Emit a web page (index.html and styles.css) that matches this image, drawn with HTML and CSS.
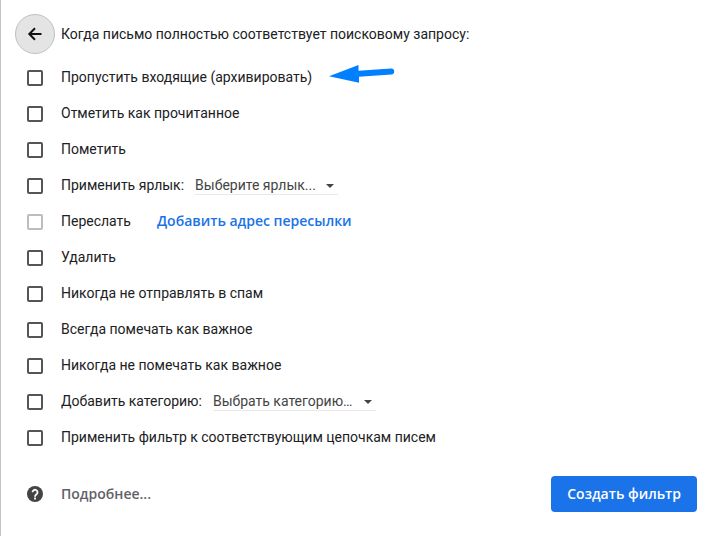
FILE: index.html
```html
<!DOCTYPE html>
<html lang="ru">
<head>
  <meta charset="UTF-8">
  <title>Создание фильтра</title>
  <link rel="stylesheet" href="styles.css">
</head>
<body>

  <form class="filter" action="#" method="POST">
    <div class="header">
      <button type="button" class="back" aria-label="Назад">
        <svg width="20" height="20" viewBox="0 0 20 20" fill="none" stroke="#111" stroke-width="2">
          <path d="M16.500 10H4.800M10 4.200L4.300 10l5.700 5.800"/>
        </svg>
      </button>
      <span>Когда письмо полностью соответствует поисковому запросу:</span>
    </div>

    <div class="options">
      <div class="row">
        <input type="checkbox" id="archive">
        <label for="archive">Пропустить входящие (архивировать)</label>
        <svg class="pointer" width="66" height="20" viewBox="0 0 66 20">
          <path d="M0 12.2L29.5 1v5.8L62 4.5a3 3 0 0 1 .4 6L30 12.7v6z" fill="#0080ff"/>
        </svg>
      </div>
      <div class="row">
        <input type="checkbox" id="read">
        <label for="read">Отметить как прочитанное</label>
      </div>
      <div class="row">
        <input type="checkbox" id="star">
        <label for="star">Пометить</label>
      </div>
      <div class="row">
        <input type="checkbox" id="label">
        <label for="label">Применить ярлык:</label>
        <span class="select">
          <select class="select-label" aria-label="Ярлык"><option>Выберите ярлык...</option></select>
        </span>
      </div>
      <div class="row">
        <input type="checkbox" id="forward" disabled>
        <label for="forward">Переслать</label>
        <a class="forward-link" href="#">Добавить адрес пересылки</a>
      </div>
      <div class="row">
        <input type="checkbox" id="delete">
        <label for="delete">Удалить</label>
      </div>
      <div class="row">
        <input type="checkbox" id="nospam">
        <label for="nospam">Никогда не отправлять в спам</label>
      </div>
      <div class="row">
        <input type="checkbox" id="important">
        <label for="important">Всегда помечать как важное</label>
      </div>
      <div class="row">
        <input type="checkbox" id="notimportant">
        <label for="notimportant">Никогда не помечать как важное</label>
      </div>
      <div class="row">
        <input type="checkbox" id="category">
        <label for="category">Добавить категорию:</label>
        <span class="select">
          <select class="select-category" aria-label="Категория"><option>Выбрать категорию…</option></select>
        </span>
      </div>
      <div class="row">
        <input type="checkbox" id="apply">
        <label for="apply">Применить фильтр к соответствующим цепочкам писем</label>
      </div>
    </div>

    <div class="footer">
      <a class="more" href="#">
        <svg width="16" height="16" viewBox="0 0 16 16">
          <circle cx="8" cy="8" r="8" fill="#444"/>
          <path d="M5.500 6.200a2.500 2.500 0 1 1 4.200 1.900C8.600 9 8 9.400 8 10.700" fill="none" stroke="#fff" stroke-width="1.8"/>
          <path d="M7.100 11.600h1.800v1.800H7.100z" fill="#fff"/>
        </svg>
        <span>Подробнее...</span>
      </a>
      <button type="submit" class="create">Создать фильтр</button>
    </div>
  </form>

</body>
</html>
```
FILE: styles.css
```css
* { box-sizing: border-box; }

body {
  margin: 0;
  background: #fff;
  color: #202124;
  font: 14px/20px Roboto, "Liberation Sans", sans-serif;
}

.filter {
  min-height: 100vh;
  padding: 14px 23px 24px 14px;
  border-left: 1px solid #c4c4c4;
}

/* Header */
.header {
  display: flex;
  align-items: center;
  gap: 6px;
  height: 40px;
}
.back {
  display: flex;
  align-items: center;
  justify-content: center;
  width: 40px;
  height: 40px;
  padding: 0;
  border: 1px solid #c0c0c4;
  border-radius: 50%;
  background: #e4e4e4;
  cursor: pointer;
}

/* Option rows */
.options {
  margin-top: 5px;
  padding-left: 12px;
}
.row {
  display: flex;
  align-items: center;
  height: 36px;
}
.row input {
  appearance: none;
  width: 16px;
  height: 16px;
  margin: 2px 18px 0 0;
  border: 2px solid #555;
  border-radius: 2px;
  background: #fff;
}
.row input:checked { background: #1a73e8; }
.row input:disabled { border-color: #bdbdbd; }
.pointer { margin-left: 17px; margin-bottom: 6px; }

.select {
  position: relative;
  margin-left: 11px;
}
.select::after {
  content: "";
  position: absolute;
  right: 4px;
  top: 9px;
  border: 4px solid transparent;
  border-top-color: #444;
  border-bottom: 0;
  pointer-events: none;
}
.select select {
  appearance: none;
  display: block;
  height: 20px;
  padding: 0;
  border: 0;
  border-bottom: 1px solid #e8e8e8;
  border-radius: 0;
  background: none;
  color: #444;
  font: inherit;
}
.select-label { width: 143px; }
.select-category { width: 163px; }

.forward-link {
  margin-left: 26px;
  color: #1a73e8;
  font-family: "Open Sans", sans-serif;
  font-weight: 600;
  text-decoration: none;
}

/* Footer */
.footer {
  display: flex;
  align-items: center;
  justify-content: space-between;
  margin-top: 21px;
  padding-left: 12px;
}
.more {
  display: flex;
  align-items: center;
  gap: 18px;
  color: #5f6368;
  font-family: "Open Sans", sans-serif;
  font-weight: 600;
  text-decoration: none;
}
.create {
  height: 36px;
  padding: 0 16px;
  border: 0;
  border-radius: 4px;
  background: #1a73e8;
  color: #fff;
  font: 600 14px/20px "Open Sans", sans-serif;
  cursor: pointer;
}
```
